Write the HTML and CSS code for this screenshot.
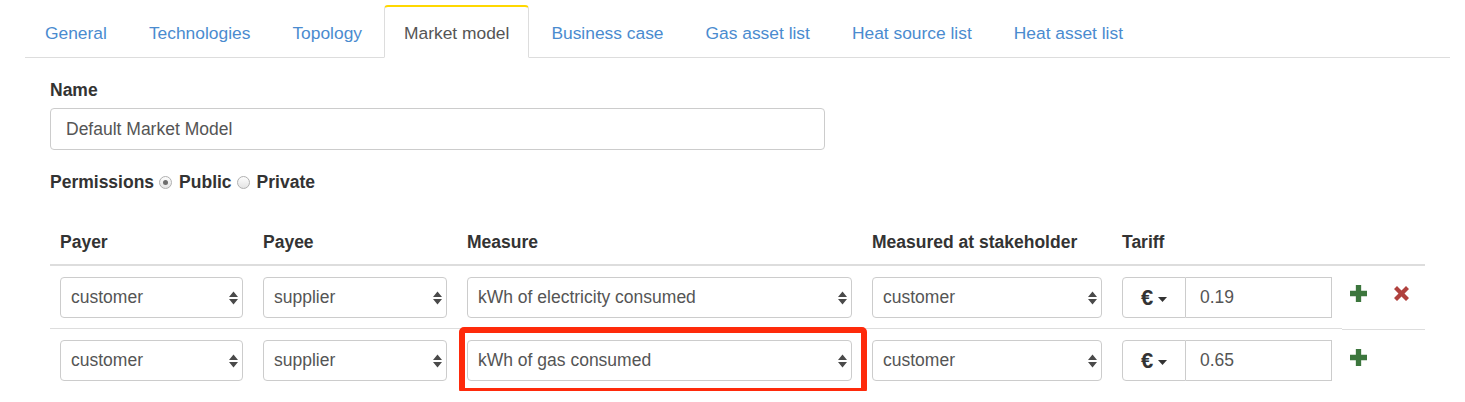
FILE: index.html
```html
<!DOCTYPE html>
<html>
<head>
<meta charset="utf-8">
<title>Market model</title>
<link rel="stylesheet" href="styles.css">
</head>
<body>
<div class="page">
  <nav class="tabs">
    <a class="tab" href="#">General</a>
    <a class="tab" href="#">Technologies</a>
    <a class="tab" href="#">Topology</a>
    <a class="tab active" href="#">Market model</a>
    <a class="tab" href="#">Business case</a>
    <a class="tab" href="#">Gas asset list</a>
    <a class="tab" href="#">Heat source list</a>
    <a class="tab" href="#">Heat asset list</a>
  </nav>

  <div class="panel">
    <div class="label">Name</div>
    <div class="text-input name-input">Default Market Model</div>

    <div class="perms">
      <span class="bold">Permissions</span>
      <span class="radio checked"></span>
      <span class="bold">Public</span>
      <span class="radio"></span>
      <span class="bold">Private</span>
    </div>

    <table class="grid">
      <colgroup>
        <col class="c-payer"><col class="c-payee"><col class="c-measure"><col class="c-at"><col class="c-tariff"><col>
      </colgroup>
      <thead>
        <tr><th>Payer</th><th>Payee</th><th>Measure</th><th>Measured at stakeholder</th><th>Tariff</th><th></th></tr>
      </thead>
      <tbody>
        <tr>
          <td><div class="select"><span>customer</span><svg class="arrows" width="9" height="14" viewBox="0 0 9 14"><path d="M0 6 L4.5 0.5 L9 6Z M0 8 L4.5 13.5 L9 8Z"/></svg></div></td>
          <td><div class="select"><span>supplier</span><svg class="arrows" width="9" height="14" viewBox="0 0 9 14"><path d="M0 6 L4.5 0.5 L9 6Z M0 8 L4.5 13.5 L9 8Z"/></svg></div></td>
          <td><div class="select"><span>kWh of electricity consumed</span><svg class="arrows" width="9" height="14" viewBox="0 0 9 14"><path d="M0 6 L4.5 0.5 L9 6Z M0 8 L4.5 13.5 L9 8Z"/></svg></div></td>
          <td><div class="select"><span>customer</span><svg class="arrows" width="9" height="14" viewBox="0 0 9 14"><path d="M0 6 L4.5 0.5 L9 6Z M0 8 L4.5 13.5 L9 8Z"/></svg></div></td>
          <td>
            <div class="tariff">
              <div class="cur">€<svg class="caret" width="9" height="5" viewBox="0 0 9 5"><path d="M0 0 L9 0 L4.5 5Z"/></svg></div>
              <div class="val">0.19</div>
            </div>
          </td>
          <td class="actions">
            <svg class="plus" width="17" height="17" viewBox="0 0 16 16"><path d="M5.5 0 H10.5 V5.5 H16 V10.5 H10.5 V16 H5.5 V10.5 H0 V5.5 H5.5Z"/></svg>
            <svg class="remove" width="15" height="15" viewBox="0 0 15 15"><path d="M0 3 L3 0 L7.5 4.5 L12 0 L15 3 L10.5 7.5 L15 12 L12 15 L7.5 10.5 L3 15 L0 12 L4.5 7.5Z"/></svg>
          </td>
        </tr>
        <tr>
          <td><div class="select"><span>customer</span><svg class="arrows" width="9" height="14" viewBox="0 0 9 14"><path d="M0 6 L4.5 0.5 L9 6Z M0 8 L4.5 13.5 L9 8Z"/></svg></div></td>
          <td><div class="select"><span>supplier</span><svg class="arrows" width="9" height="14" viewBox="0 0 9 14"><path d="M0 6 L4.5 0.5 L9 6Z M0 8 L4.5 13.5 L9 8Z"/></svg></div></td>
          <td>
            <div class="select highlighted"><span>kWh of gas consumed</span><svg class="arrows" width="9" height="14" viewBox="0 0 9 14"><path d="M0 6 L4.5 0.5 L9 6Z M0 8 L4.5 13.5 L9 8Z"/></svg><span class="callout"></span></div>
          </td>
          <td><div class="select"><span>customer</span><svg class="arrows" width="9" height="14" viewBox="0 0 9 14"><path d="M0 6 L4.5 0.5 L9 6Z M0 8 L4.5 13.5 L9 8Z"/></svg></div></td>
          <td>
            <div class="tariff">
              <div class="cur">€<svg class="caret" width="9" height="5" viewBox="0 0 9 5"><path d="M0 0 L9 0 L4.5 5Z"/></svg></div>
              <div class="val">0.65</div>
            </div>
          </td>
          <td class="actions">
            <svg class="plus" width="17" height="17" viewBox="0 0 16 16"><path d="M5.5 0 H10.5 V5.5 H16 V10.5 H10.5 V16 H5.5 V10.5 H0 V5.5 H5.5Z"/></svg>
          </td>
        </tr>
      </tbody>
    </table>
  </div>
</div>
</body>
</html>
```

FILE: styles.css
```css
html, body {
  margin: 0;
  background: #fff;
}

body {
  font-family: "Liberation Sans", Arial, Helvetica, sans-serif;
  color: #333;
  font-size: 17.5px;
}

.page {
  padding: 5px 15px 0 25px;
}

/* Tabs */
.tabs {
  display: flex;
  border-bottom: 1px solid #ddd;
}

.tab {
  display: block;
  padding: 14px 19px 12px;
  line-height: 24px;
  font-size: 17.4px;
  margin-right: 2px;
  margin-bottom: -1px;
  color: #4a8bcf;
  text-decoration: none;
  border: 1px solid transparent;
  border-top: 2px solid transparent;
  border-radius: 4px 4px 0 0;
}

.tab.active {
  color: #555;
  background: #fff;
  border-color: #ddd;
  border-top-color: #ffd800;
  border-bottom-color: #fff;
}

/* Panel */
.panel {
  padding: 0 25px;
}

.label {
  font-weight: bold;
  line-height: 24px;
  margin-top: 20px;
}

.text-input {
  box-sizing: border-box;
  height: 42px;
  border: 1px solid #ccc;
  border-radius: 4px;
  padding: 0 15px;
  display: flex;
  align-items: center;
  color: #555;
}

.name-input {
  width: 775px;
  margin-top: 6px;
}

.perms {
  display: flex;
  align-items: center;
  line-height: 24px;
  margin-top: 20px;
}

.bold {
  font-weight: bold;
}

.radio {
  box-sizing: border-box;
  width: 13px;
  height: 13px;
  border-radius: 50%;
  border: 1px solid #b0b0b0;
  background: linear-gradient(#fdfdfd, #e4e4e4);
  margin: 0 7px 0 5px;
  display: flex;
  align-items: center;
  justify-content: center;
}

.radio.checked::after {
  content: "";
  width: 5px;
  height: 5px;
  border-radius: 50%;
  background: #6d6d6d;
}

/* Table */
.grid {
  width: 100%;
  margin-top: 26px;
  border-collapse: collapse;
  table-layout: fixed;
}

.c-payer { width: 203px; }
.c-payee { width: 204px; }
.c-measure { width: 405px; }
.c-at { width: 250px; }
.c-tariff { width: 230px; }

.grid th {
  text-align: left;
  font-weight: bold;
  padding: 10px;
  line-height: 24px;
  border-bottom: 2px solid #ddd;
}

.grid td {
  padding: 11px 10px 10px;
  vertical-align: top;
}

.grid tbody tr + tr td {
  border-top: 1px solid #ddd;
}

.select {
  position: relative;
  box-sizing: border-box;
  height: 41px;
  display: flex;
  align-items: center;
  justify-content: space-between;
  border: 1px solid #ccc;
  border-radius: 4px;
  padding: 0 4px 0 10px;
  color: #555;
  background: #fff;
}

.arrows {
  fill: #4a4a4a;
  flex: none;
}

.callout {
  position: absolute;
  top: -14px;
  bottom: -14px;
  left: -9px;
  right: -16px;
  border: 6px solid #fe2a0b;
  border-radius: 5px;
}

.tariff {
  display: flex;
  height: 41px;
}

.cur {
  box-sizing: border-box;
  width: 64px;
  flex: none;
  display: flex;
  align-items: center;
  justify-content: center;
  gap: 5px;
  border: 1px solid #ccc;
  border-radius: 4px 0 0 4px;
  font-size: 22px;
  font-weight: bold;
  color: #333;
  padding-top: 1px;
}

.caret {
  fill: #333;
  margin-top: 3px;
}

.val {
  box-sizing: border-box;
  flex: 1;
  display: flex;
  align-items: center;
  border: 1px solid #ccc;
  border-left: none;
  padding-left: 14px;
  color: #555;
}

.actions {
  display: flex;
  gap: 27px;
}

.grid td.actions {
  padding-top: 19px;
  padding-left: 8px;
}

.plus {
  fill: #3c763d;
  flex: none;
}

.remove {
  fill: #b0413e;
  flex: none;
  margin-top: 1px;
}
```
